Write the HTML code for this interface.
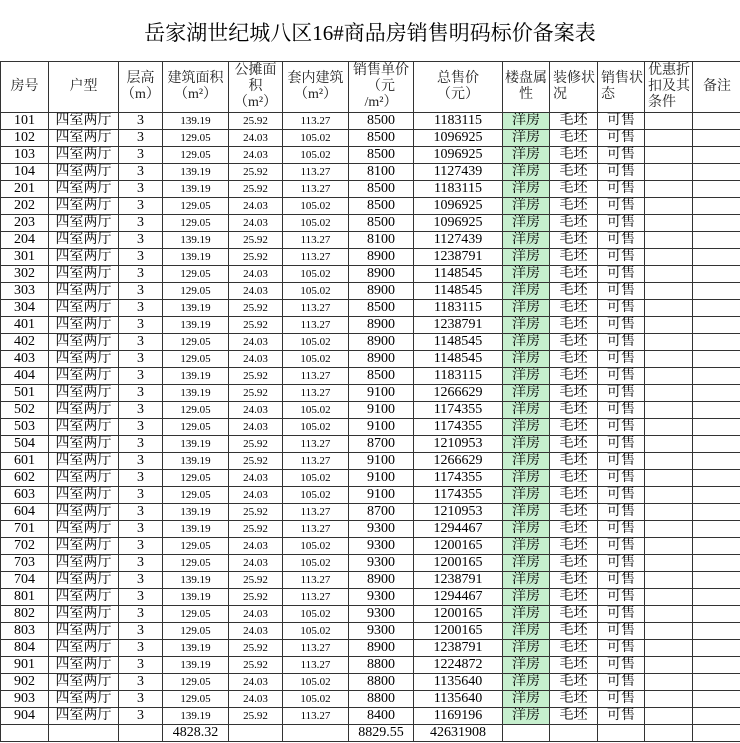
<!DOCTYPE html>
<html><head><meta charset="utf-8"><style>
body{margin:0;width:740px;height:743px;background:#fff;overflow:hidden;font-family:"Liberation Serif","Noto Serif CJK SC",serif;color:#000}
h1{position:absolute;top:19px;left:0;width:740px;margin:0;text-align:center;font-size:21px;font-weight:normal;line-height:28px}
table{position:absolute;top:61px;left:0;border-collapse:collapse;table-layout:fixed;width:741px}
td{border:1px solid #333;padding:0;text-align:center;font-size:14px;line-height:16px;height:16px;overflow:hidden;white-space:nowrap}
tr.h td{height:50px;white-space:normal;line-height:16px;color:#222}
td.s{font-size:11px}
td.g{background:#c6efce}
td.l{text-align:left;padding-left:3px}
</style></head><body>
<h1>岳家湖世纪城八区16#商品房销售明码标价备案表</h1>
<table>
<colgroup><col style="width:48px"><col style="width:70px"><col style="width:44px"><col style="width:66px"><col style="width:54px"><col style="width:66px"><col style="width:65px"><col style="width:89px"><col style="width:47px"><col style="width:48px"><col style="width:47px"><col style="width:48px"><col style="width:49px"></colgroup>
<tr class="h"><td>房号</td><td>户型</td><td>层高<br>（m）</td><td>建筑面积<br>（m²）</td><td>公摊面<br>积<br>（m²）</td><td>套内建筑<br>（m²）</td><td>销售单价<br>（元<br>/m²）</td><td>总售价<br>（元）</td><td>楼盘属<br>性</td><td class="l">装修状<br>况</td><td class="l">销售状<br>态</td><td class="l">优惠折<br>扣及其<br>条件</td><td>备注</td></tr>
<tbody id="b"></tbody>
<tr><td></td><td></td><td></td><td>4828.32</td><td></td><td></td><td>8829.55</td><td>42631908</td><td></td><td></td><td></td><td></td><td></td></tr>
</table>
<script>
var rows=[["101","8500","1183115",0],["102","8500","1096925",1],["103","8500","1096925",1],["104","8100","1127439",0],["201","8500","1183115",0],["202","8500","1096925",1],["203","8500","1096925",1],["204","8100","1127439",0],["301","8900","1238791",0],["302","8900","1148545",1],["303","8900","1148545",1],["304","8500","1183115",0],["401","8900","1238791",0],["402","8900","1148545",1],["403","8900","1148545",1],["404","8500","1183115",0],["501","9100","1266629",0],["502","9100","1174355",1],["503","9100","1174355",1],["504","8700","1210953",0],["601","9100","1266629",0],["602","9100","1174355",1],["603","9100","1174355",1],["604","8700","1210953",0],["701","9300","1294467",0],["702","9300","1200165",1],["703","9300","1200165",1],["704","8900","1238791",0],["801","9300","1294467",0],["802","9300","1200165",1],["803","9300","1200165",1],["804","8900","1238791",0],["901","8800","1224872",0],["902","8800","1135640",1],["903","8800","1135640",1],["904","8400","1169196",0]];
var h="";rows.forEach(function(r){var a=r[3]?["129.05","24.03","105.02"]:["139.19","25.92","113.27"];
h+="<tr><td>"+r[0]+"</td><td>四室两厅</td><td>3</td><td class=s>"+a[0]+"</td><td class=s>"+a[1]+"</td><td class=s>"+a[2]+"</td><td>"+r[1]+"</td><td>"+r[2]+"</td><td class=g>洋房</td><td>毛坯</td><td>可售</td><td></td><td></td></tr>";});
document.getElementById("b").innerHTML=h;
</script>
</body></html>
